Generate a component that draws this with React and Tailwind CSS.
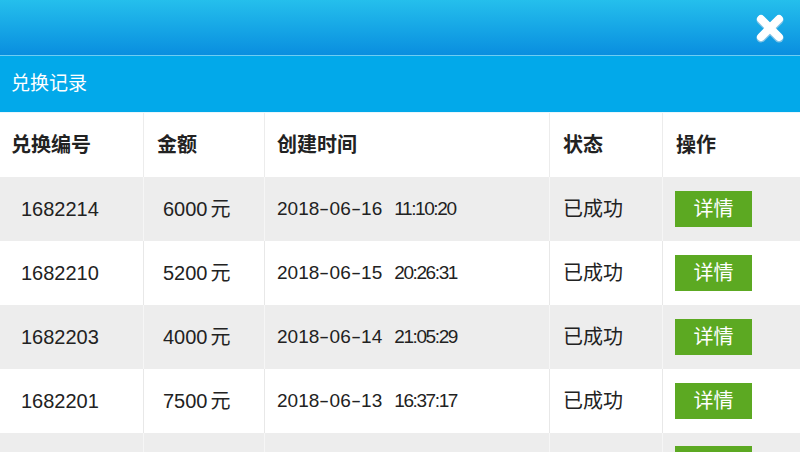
import React from 'react';

const records = [
  { id: '1682214', amount: '6000', date: '2018-06-16', time: '11:10:20' },
  { id: '1682210', amount: '5200', date: '2018-06-15', time: '20:26:31' },
  { id: '1682203', amount: '4000', date: '2018-06-14', time: '21:05:29' },
  { id: '1682201', amount: '7500', date: '2018-06-13', time: '16:37:17' },
  { id: '', amount: '', date: '', time: '' },
];

const cols = 'grid grid-cols-[143px_121px_285px_113px_1fr]';

const CloseIcon = () => (
  <svg width="34" height="34" viewBox="0 0 34 34">
    <g strokeLinecap="round" strokeWidth="9" stroke="#7fc3e6">
      <line x1="8" y1="9" x2="26" y2="27" />
      <line x1="26" y1="9" x2="8" y2="27" />
    </g>
    <g strokeLinecap="round" strokeWidth="8" stroke="#ffffff">
      <line x1="8" y1="8" x2="26" y2="26" />
      <line x1="26" y1="8" x2="8" y2="26" />
    </g>
  </svg>
);

// date with the wide dashes seen in the screenshot
const DateText = ({ value }) => {
  const parts = value.split('-');
  return (
    <span className="text-[19px]">
      {parts.map((p, i) => (
        <React.Fragment key={i}>
          {i > 0 && <span className="inline-block mx-[2px] scale-x-[1.6]">-</span>}
          {p}
        </React.Fragment>
      ))}
    </span>
  );
};

export default function App() {
  return (
    <div className="w-[800px] h-[452px] overflow-hidden bg-white text-[#222] font-['Liberation_Sans','Noto_Sans_CJK_SC',sans-serif]">
      {/* top bar */}
      <div className="h-[55px] bg-gradient-to-b from-[#25bfec] to-[#0a8edf] flex items-center justify-end pr-[13px]">
        <CloseIcon />
      </div>
      <div className="h-px bg-[#6fcdf2]" />
      {/* title */}
      <div className="h-[56px] bg-[#02a9ea] flex items-center pl-[11px] text-white text-[19px]">
        兑换记录
      </div>
      <div className="h-px bg-[#e9f6fc]" />

      {/* header */}
      <div className={`${cols} h-[64px] bg-white font-bold text-[20px]`}>
        <div className="flex items-center pl-[11px]">兑换编号</div>
        <div className="flex items-center pl-[13px] border-l border-[#ececec]">金额</div>
        <div className="flex items-center pl-[12px] border-l border-[#ececec]">创建时间</div>
        <div className="flex items-center pl-[13px] border-l border-[#ececec]">状态</div>
        <div className="flex items-center pl-[13px] border-l border-[#ececec]">操作</div>
      </div>

      {records.map((r, i) => {
        const gray = i % 2 === 0;
        const line = gray ? 'border-[#f6f6f6]' : 'border-[#e8e8e8]';
        return (
          <div key={i} className={`${cols} h-[64px] text-[20px] ${gray ? 'bg-[#ededed]' : 'bg-white'}`}>
            <div className="flex items-center pl-[21px]">{r.id}</div>
            <div className={`flex items-center pl-[19px] border-l ${line}`}>
              {r.amount && (
                <span>
                  {r.amount}
                  <span className="ml-[3px]">元</span>
                </span>
              )}
            </div>
            <div className={`flex items-center pl-[12px] border-l ${line}`}>
              {r.date && (
                <>
                  <DateText value={r.date} />
                  <span className="ml-[12px] text-[19px] tracking-[-1.4px]">{r.time}</span>
                </>
              )}
            </div>
            <div className={`flex items-center pl-[13px] border-l ${line}`}>
              {r.id && '已成功'}
            </div>
            <div className={`flex items-center pl-[12px] border-l ${line}`}>
              {r.id ? (
                <button className="w-[77px] h-[36px] bg-[#5ca922] text-white text-[20px] flex items-center justify-center">
                  详情
                </button>
              ) : (
                <div className="w-[77px] h-[36px] bg-[#5ca922] self-start mt-[13px]" />
              )}
            </div>
          </div>
        );
      })}
    </div>
  );
}
